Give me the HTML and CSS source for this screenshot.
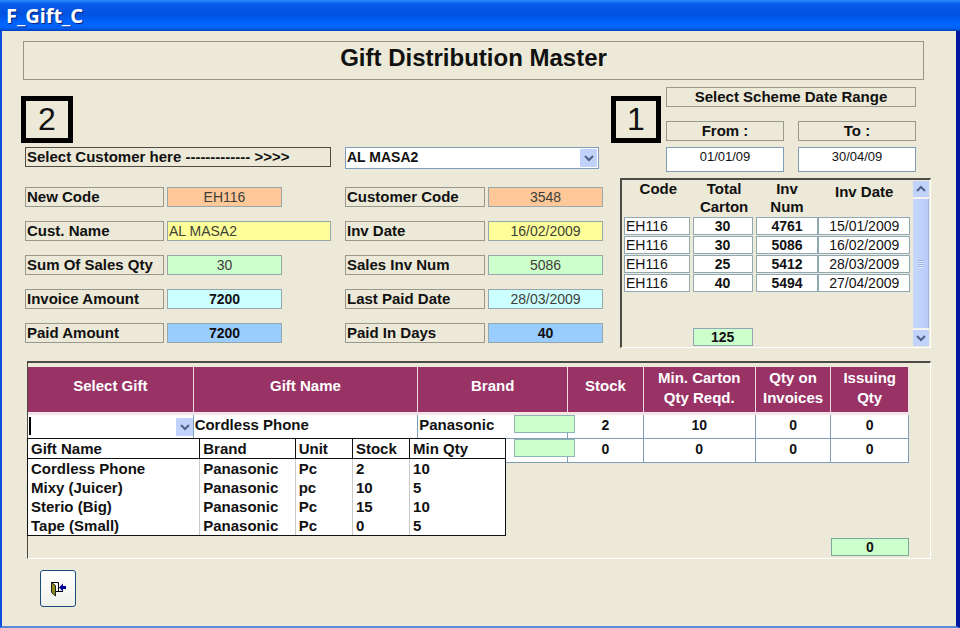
FILE: index.html
```html
<!DOCTYPE html>
<html lang="en">
<head>
<meta charset="utf-8">
<meta name="viewport" content="width=device-width, initial-scale=1">
<title>F_Gift_C</title>
<link rel="stylesheet" href="styles.css">
</head>
<body>
<div class="window">
  <header class="titlebar">F_Gift_C</header>
  <form class="form">
    <h1 class="heading">Gift Distribution Master</h1>

    <div class="top">
      <section class="customer">
        <div class="step">2</div>
        <div class="pair pair-select">
          <label class="tag tag-dark" for="customer">Select Customer here ------------- &gt;&gt;&gt;&gt;</label>
          <div class="combo combo-customer">
            <select id="customer"><option>AL MASA2</option></select>
            <svg class="arrow" viewBox="0 0 17 18" aria-hidden="true"><rect width="17" height="18" rx="1"/><path d="M5 7l4 4 4-4"/></svg>
          </div>
        </div>
        <div class="pair">
          <div class="field"><label class="tag" for="f1">New Code</label><input id="f1" class="box orange" value="EH116"></div>
          <div class="field field-right"><label class="tag" for="f2">Customer Code</label><input id="f2" class="box orange" value="3548"></div>
        </div>
        <div class="pair">
          <div class="field"><label class="tag" for="f3">Cust. Name</label><input id="f3" class="box yellow wide" value="AL MASA2"></div>
          <div class="field field-right"><label class="tag" for="f4">Inv Date</label><input id="f4" class="box yellow" value="16/02/2009"></div>
        </div>
        <div class="pair">
          <div class="field"><label class="tag" for="f5">Sum Of Sales Qty</label><input id="f5" class="box green" value="30"></div>
          <div class="field field-right"><label class="tag" for="f6">Sales Inv Num</label><input id="f6" class="box green" value="5086"></div>
        </div>
        <div class="pair">
          <div class="field"><label class="tag" for="f7">Invoice Amount</label><input id="f7" class="box cyan strong" value="7200"></div>
          <div class="field field-right"><label class="tag" for="f8">Last Paid Date</label><input id="f8" class="box cyan" value="28/03/2009"></div>
        </div>
        <div class="pair">
          <div class="field"><label class="tag" for="f9">Paid Amount</label><input id="f9" class="box blue strong" value="7200"></div>
          <div class="field field-right"><label class="tag" for="f10">Paid In Days</label><input id="f10" class="box blue strong" value="40"></div>
        </div>
      </section>

      <section class="scheme">
        <div class="range">
          <div class="step">1</div>
          <div class="dates">
            <div class="tag center range-title">Select Scheme Date Range</div>
            <div class="date"><label class="tag center" for="from">From :</label><input id="from" class="box date-box" value="01/01/09"></div>
            <div class="date"><label class="tag center" for="to">To :</label><input id="to" class="box date-box" value="30/04/09"></div>
          </div>
        </div>
        <div class="sunken invoices">
          <table class="inv">
            <colgroup><col class="c-code"><col class="c-carton"><col class="c-num"><col class="c-date"></colgroup>
            <thead><tr><th>Code</th><th>Total<br>Carton</th><th>Inv<br>Num</th><th class="inv-date">Inv Date</th></tr></thead>
            <tbody>
              <tr><td><span class="cell left">EH116</span></td><td><span class="cell strong">30</span></td><td><span class="cell strong">4761</span></td><td><span class="cell">15/01/2009</span></td></tr>
              <tr><td><span class="cell left">EH116</span></td><td><span class="cell strong">30</span></td><td><span class="cell strong">5086</span></td><td><span class="cell">16/02/2009</span></td></tr>
              <tr><td><span class="cell left">EH116</span></td><td><span class="cell strong">25</span></td><td><span class="cell strong">5412</span></td><td><span class="cell">28/03/2009</span></td></tr>
              <tr><td><span class="cell left">EH116</span></td><td><span class="cell strong">40</span></td><td><span class="cell strong">5494</span></td><td><span class="cell">27/04/2009</span></td></tr>
            </tbody>
            <tfoot><tr><td></td><td><span class="cell strong green">125</span></td><td></td><td></td></tr></tfoot>
          </table>
          <div class="scrollbar">
            <button type="button" aria-label="Scroll up"><svg viewBox="0 0 16 16"><path d="M4 10l4-4 4 4"/></svg></button>
            <div class="thumb"><i></i></div>
            <button type="button" aria-label="Scroll down"><svg viewBox="0 0 16 16"><path d="M4 6l4 4 4-4"/></svg></button>
          </div>
        </div>
      </section>
    </div>

    <section class="sunken gifts">
      <table class="gift">
        <colgroup><col class="g1"><col class="g2"><col class="g3"><col class="g4"><col class="g5"><col class="g6"><col class="g7"></colgroup>
        <thead><tr><th>Select Gift</th><th>Gift Name</th><th>Brand</th><th>Stock</th><th class="two">Min. Carton Qty Reqd.</th><th class="two">Qty on Invoices</th><th class="two">Issuing<br>Qty</th></tr></thead>
        <tbody>
          <tr>
            <td class="picker">
              <div class="combo combo-gift">
                <select aria-label="Select Gift"><option></option><option>Cordless Phone</option><option>Mixy (Juicer)</option><option>Sterio (Big)</option><option>Tape (Small)</option></select>
                <svg class="arrow" viewBox="0 0 17 18" aria-hidden="true"><rect width="17" height="18" rx="1"/><path d="M5 7l4 4 4-4"/></svg>
              </div>
              <div class="menu">
                <table>
                  <colgroup><col class="m1"><col class="m2"><col class="m3"><col class="m4"><col class="m5"></colgroup>
                  <thead><tr><th>Gift Name</th><th>Brand</th><th>Unit</th><th>Stock</th><th>Min Qty</th></tr></thead>
                  <tbody>
                    <tr><td>Cordless Phone</td><td>Panasonic</td><td>Pc</td><td>2</td><td>10</td></tr>
                    <tr><td>Mixy (Juicer)</td><td>Panasonic</td><td>pc</td><td>10</td><td>5</td></tr>
                    <tr><td>Sterio (Big)</td><td>Panasonic</td><td>Pc</td><td>15</td><td>10</td></tr>
                    <tr><td>Tape (Small)</td><td>Panasonic</td><td>Pc</td><td>0</td><td>5</td></tr>
                  </tbody>
                </table>
              </div>
            </td>
            <td class="text">Cordless Phone</td><td class="text brand">Panasonic<span class="patch"></span></td><td>2</td><td>10</td><td>0</td><td>0</td>
          </tr>
          <tr><td></td><td></td><td class="text brand"><span class="patch"></span></td><td>0</td><td>0</td><td>0</td><td>0</td></tr>
        </tbody>
      </table>
      <output class="total">0</output>
    </section>

    <button type="button" class="exit" aria-label="Close form">
      <svg viewBox="0 0 18 18" aria-hidden="true">
        <path d="M2 2.500h7.500v9M6 11.500h8" fill="none" stroke="#000"/>
        <path d="M2.500 2.500L6.500 5.500V16L2.500 12.500z" fill="#8c8c1c" stroke="#222"/>
        <path d="M10 7.500L14 3.500V6H17V9H14V11.500z" fill="#000090"/>
      </svg>
    </button>
  </form>
</div>
</body>
</html>
```
FILE: styles.css
```css
* { box-sizing: border-box; }

body {
  margin: 0;
  background: #ece9d8;
  color: #111;
  font: 14px/18px "Liberation Sans", Arial, sans-serif;
}

input, select, button { font: inherit; color: inherit; margin: 0; border-radius: 0; }

.window {
  min-height: 100vh;
  display: flex;
  flex-direction: column;
  border: solid #0a50dc;
  border-width: 0 4px 2px 2px;
  border-right-color: #0018a0;
  border-bottom-color: #5a8ad8;
}

.titlebar {
  height: 31px;
  margin: 0 -4px 0 -2px;
  padding: 3px 6px 0;
  background: linear-gradient(#2a8cff 0, #0a5be8 4px, #0052e0 14px, #0066ff 24px, #0062f8 28px, #0040b8 31px);
  color: #fff;
  font: bold 20px/26px "Noto Sans", sans-serif;
  text-shadow: 1px 1px 1px #002080;
}

.form { flex: 1; padding: 10px 25px 18px 19px; }

.heading {
  margin: 0 7px 0 2px;
  border: 1px solid #98948a;
  height: 39px;
  font-size: 24px;
  line-height: 32px;
  text-align: center;
}

.top { display: grid; grid-template-columns: 584fr 320fr; gap: 6px; margin-top: 7px; }

.step {
  width: 52px;
  height: 47px;
  margin-top: 9px;
  border: 5px solid #000;
  font-size: 32px;
  line-height: 37px;
  text-align: center;
}

.pair {
  display: grid;
  grid-template-columns: 306fr 258fr;
  gap: 14px;
  margin: 14px 2px 0 4px;
}
.pair-select { margin-top: 4px; height: 26px; align-items: start; }

.field { display: grid; grid-template-columns: 139fr 115fr 46fr; gap: 3px; }
.field-right { grid-template-columns: 140fr 115fr; }

.tag {
  display: block;
  height: 20px;
  padding: 0 1px;
  border: 1px solid #98988c;
  font-size: 15px;
  font-weight: bold;
  line-height: 18px;
  white-space: nowrap;
}
.tag-dark { border-color: #504c44; }
.center { text-align: center; }

.box {
  width: 100%;
  min-width: 0;
  height: 20px;
  padding: 0 2px;
  border: 1px solid #96a8ac;
  background: #fff;
  color: #404038;
  text-align: center;
}
.wide { grid-column: span 2; text-align: left; padding-left: 1px; }
.orange { background: #ffc899; }
.yellow { background: #ffff99; }
.green { background: #ccffcc; }
.cyan { background: #ccffff; }
.blue { background: #99ccff; }
.strong { font-weight: bold; color: #111; }

.combo { position: relative; background: #fff; }
.combo select {
  display: block;
  width: 100%;
  height: 100%;
  padding: 0 1px 2px;
  border: 0;
  background: none;
  appearance: none;
  font-weight: bold;
  outline: 0;
}
.combo-customer { height: 22px; margin-right: 4px; border: 1px solid #7f9db9; }
.arrow { position: absolute; top: 1px; right: 1px; width: 17px; height: 18px; }
.arrow rect { fill: #c2d3fb; }
.arrow path, .scrollbar path { fill: none; stroke: #4d6185; stroke-width: 2; }

.range { display: grid; grid-template-columns: 50px 1fr; gap: 5px; margin-right: 15px; }
.range .step { width: 50px; }
.dates { display: grid; grid-template-columns: 1fr 1fr; gap: 14px; }
.range-title { grid-column: span 2; }
.date-box { height: 25px; margin-top: 6px; padding-bottom: 6px; border-color: #7f9db9; color: #111; font-size: 13px; }

.sunken {
  border: solid #fff;
  border-width: 2px 1px 1px 2px;
  border-top-color: #4c4a44;
  border-left-color: #4c4a44;
}

.invoices { display: flex; margin: 6px 0 0 9px; }
.inv { flex: 1; table-layout: fixed; border-collapse: collapse; margin: 0 3px 0 2px; }
.inv th { height: 37px; padding: 0; font-size: 15px; line-height: 18px; vertical-align: top; }
.inv .inv-date { padding-top: 3px; }
.inv td { padding: 0 3px 1px 0; }
.inv td:nth-child(n+3) { padding-right: 0; }
.inv tfoot td { padding-top: 35px; }
.c-code { width: 24%; }
.c-carton { width: 22%; }
.c-num { width: 22%; }
.c-date { width: 32%; }
.cell {
  display: block;
  height: 18px;
  border: 1px solid #8fa8b4;
  background: #fff;
  line-height: 17px;
  text-align: center;
}
.cell.left { text-align: left; padding-left: 1px; }
.cell.green { background: #ccffcc; }

.scrollbar { width: 16px; margin: 1px 1px 1px 0; display: flex; flex-direction: column; gap: 2px; background: #f4f3ee; }
.scrollbar button { width: 16px; height: 16px; padding: 0; border: 0; background: #c2d3fb; }
.scrollbar svg { display: block; width: 16px; height: 16px; }
.thumb { flex: 1; display: grid; place-items: center; background: linear-gradient(90deg, #c8d8fc, #b8ccf8); border-right: 1px solid #a0b8ec; }
.thumb i { width: 6px; height: 8px; background: repeating-linear-gradient(#9fb5ea 0 1px, #dfe8fe 1px 2px); }

.gifts { margin: 13px 0 0 6px; padding: 4px 21px 2px 0; border-left-width: 1px; }
.gift { width: 100%; table-layout: fixed; border-spacing: 0; }
.gift > thead th {
  height: 48px;
  padding: 0 2px 8px;
  border-right: 1px solid #f0dce0;
  border-bottom: 3px solid #f4e6e4;
  background: #993366;
  background-clip: padding-box;
  color: #fff;
  font-size: 15px;
  line-height: 20px;
}
.gift > thead .two { padding: 0 0 4px; }
.gift > tbody > tr > td {
  height: 24px;
  padding: 0 0 3px;
  border: solid #7f9db9;
  border-width: 0 1px 1px 0;
  background: #fff;
  font-weight: bold;
  line-height: 20px;
  text-align: center;
}
.gift > tbody > tr > .text { position: relative; padding-left: 1px; font-size: 15px; text-align: left; }
.gift > tbody > tr > .picker { position: relative; padding: 0; }
.g1 { width: 18.8%; }
.g2 { width: 25.5%; }
.g3 { width: 17%; }
.g4 { width: 8.6%; }
.g5 { width: 12.7%; }
.g6 { width: 8.6%; }
.g7 { width: 8.8%; }

.patch {
  position: absolute;
  z-index: 1;
  top: 0;
  right: -8px;
  width: 61px;
  height: 18px;
  border: 1px solid #8fb4b4;
  background: #ccffcc;
}

.combo-gift { height: 23px; }
.combo-gift::before { content: ""; position: absolute; left: 1px; top: 2px; width: 2px; height: 18px; background: #000; }
.combo-gift .arrow { top: 2px; right: 0; height: 20px; }

.menu {
  position: absolute;
  z-index: 2;
  top: 100%;
  left: -1px;
  width: 291%;
  border: 1px solid #111;
  background: #fff;
}
.menu table { width: 100%; table-layout: fixed; border-collapse: collapse; font-size: 15px; line-height: 19px; text-align: left; }
.menu th, .menu td { height: 19px; padding: 0 0 0 3px; font-weight: bold; border-left: 1px solid #c8c8c8; white-space: nowrap; }
.menu th { border: 1px solid #111; border-top: 0; }
.menu th:first-child, .menu td:first-child { border-left: 0; }
.menu th:last-child { border-right: 0; }
.m1 { width: 36%; }
.m2 { width: 20%; }
.m3 { width: 12%; }
.m4 { width: 12%; }
.m5 { width: 20%; }

.total {
  display: block;
  width: 78px;
  height: 18px;
  margin: 75px 0 0 auto;
  border: 1px solid #7fa89c;
  background: #ccffcc;
  font-weight: bold;
  line-height: 17px;
  text-align: center;
}

.exit {
  display: grid;
  place-items: center;
  width: 36px;
  height: 37px;
  margin: 11px 0 0 19px;
  padding: 0;
  border: 1px solid #1c4a7c;
  border-radius: 3px;
  background: linear-gradient(#fff, #f0f0ea);
}
.exit svg { width: 18px; height: 18px; }
```
